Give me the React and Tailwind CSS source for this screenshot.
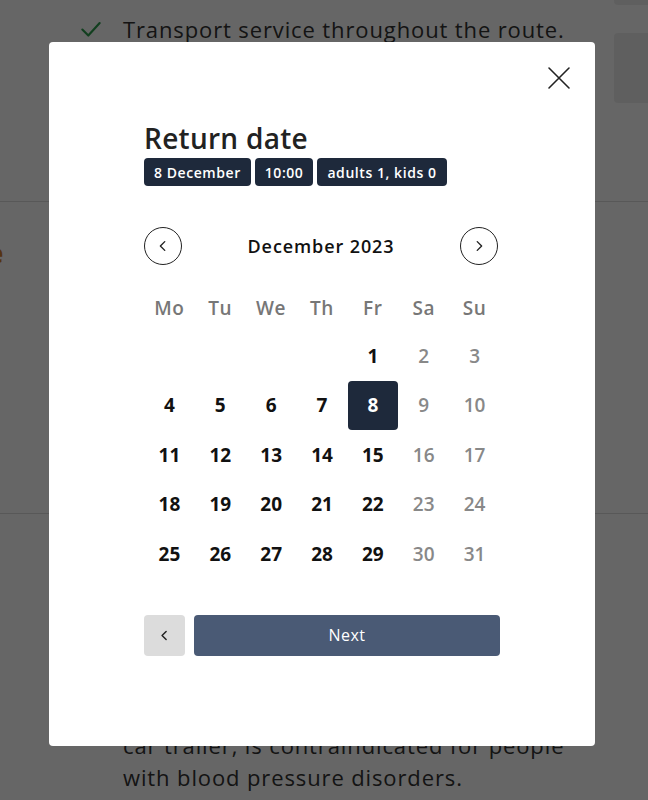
import React from "react";

const font = { fontFamily: '"Open Sans", "Noto Sans", sans-serif' };

const weeks = [
  [null, null, null, null, 1, 2, 3],
  [4, 5, 6, 7, 8, 9, 10],
  [11, 12, 13, 14, 15, 16, 17],
  [18, 19, 20, 21, 22, 23, 24],
  [25, 26, 27, 28, 29, 30, 31],
];

const dayNames = ["Mo", "Tu", "We", "Th", "Fr", "Sa", "Su"];

const Chevron = ({ dir = "left", size = 14, stroke = 1.6 }) => (
  <svg width={size} height={size} viewBox="0 0 16 16" fill="none">
    <path
      d={dir === "left" ? "M10 3 L5 8 L10 13" : "M6 3 L11 8 L6 13"}
      stroke="currentColor"
      strokeWidth={stroke}
      strokeLinecap="round"
      strokeLinejoin="round"
    />
  </svg>
);

const chip =
  "h-[28px] px-[10px] flex items-center rounded-[4px] bg-[#1e293b] text-white text-[14px] font-semibold tracking-[0.04em]";

const App = () => {
  return (
    <div className="relative w-full h-[800px] overflow-hidden bg-white" style={font}>
      {/* Page behind the modal */}
      <div className="relative">
        <div className="absolute right-0 top-0 w-[34px] h-[5px] bg-[#eeeeee] rounded-bl"></div>
        <div className="absolute right-0 top-[33px] w-[34px] h-[70px] bg-[#eeeeee] rounded-l"></div>
        <div className="flex items-center gap-[19px] pl-[78px] pt-[14px] h-[44px]">
          <svg width="26" height="26" viewBox="0 0 24 24" fill="none">
            <path d="M4 12.5 L9.5 18 L20 6.5" stroke="#2e9e4f" strokeWidth="2" strokeLinecap="round" strokeLinejoin="round" />
          </svg>
          <span className="text-[22px] text-[#333333] tracking-[0.04em]">Transport service throughout the route.</span>
        </div>
        <div className="mt-[157px] border-t border-[#dddddd]"></div>
        <div className="pt-[38px] text-[26px] font-bold text-[#d5822f] leading-none -ml-[12px]">e</div>
        <div className="mt-[247px] border-t border-[#dddddd]"></div>
        <div className="pl-[123px] mt-[215px] text-[22px] text-[#333333] leading-[32px] tracking-[0.04em]">
          <div>car trailer, is contraindicated for people</div>
          <div>with blood pressure disorders.</div>
        </div>
      </div>

      {/* Overlay */}
      <div className="absolute inset-0 bg-black/60"></div>

      {/* Modal */}
      <div className="absolute left-[49px] top-[42px] w-[546px] h-[704px] bg-white rounded-[4px]">
        <button className="absolute right-[24px] top-[24px] w-[24px] h-[24px] flex items-center justify-center text-[#222222]">
          <svg width="24" height="24" viewBox="0 0 24 24" fill="none">
            <path d="M2 2 L22 22 M22 2 L2 22" stroke="currentColor" strokeWidth="1.6" strokeLinecap="round" />
          </svg>
        </button>

        <div className="w-[356px] mx-auto pt-[78px]">
          <h2 className="text-[28px] font-semibold text-[#222222] leading-[36px] tracking-[0.01em]">Return date</h2>
          <div className="flex gap-[4px] mt-[2px]">
            <span className={chip}>8 December</span>
            <span className={chip}>10:00</span>
            <span className={chip}>adults 1, kids 0</span>
          </div>

          <div className="flex items-center justify-between mt-[41px] pr-[2px]">
            <button className="w-[38px] h-[38px] rounded-full border border-[#222222] flex items-center justify-center text-[#222222]">
              <Chevron dir="left" size={14} />
            </button>
            <span className="text-[18px] font-semibold text-[#111111] tracking-[0.05em]">December 2023</span>
            <button className="w-[38px] h-[38px] rounded-full border border-[#222222] flex items-center justify-center text-[#222222]">
              <Chevron dir="right" size={14} />
            </button>
          </div>

          <div className="grid grid-cols-7 mt-[20px]">
            {dayNames.map((d) => (
              <div key={d} className="h-[46px] flex items-center justify-center text-[19px] font-semibold text-[#777777] tracking-[0.03em]">
                {d}
              </div>
            ))}
          </div>
          <div className="grid grid-cols-7">
            {weeks.flat().map((d, i) => {
              const weekend = i % 7 >= 5;
              const selected = d === 8;
              return (
                <div key={i} className="h-[49.5px] flex items-center justify-center">
                  {d && (
                    <span
                      className={
                        selected
                          ? "w-[50px] h-[49px] rounded-[4px] bg-[#1e293b] text-white flex items-center justify-center text-[19px] font-bold"
                          : weekend
                          ? "text-[19px] font-semibold text-[#888888]"
                          : "text-[19px] font-bold text-[#111111]"
                      }
                    >
                      {d}
                    </span>
                  )}
                </div>
              );
            })}
          </div>

          <div className="flex gap-[9px] mt-[36px]">
            <button className="w-[41px] h-[41px] rounded-[4px] bg-[#dcdcdc] flex items-center justify-center text-[#222222]">
              <Chevron dir="left" size={13} stroke={1.8} />
            </button>
            <button className="flex-1 h-[41px] rounded-[4px] bg-[#4a5a75] text-white text-[16px] font-medium tracking-[0.03em]">
              Next
            </button>
          </div>
        </div>
      </div>
    </div>
  );
};

export default App;
